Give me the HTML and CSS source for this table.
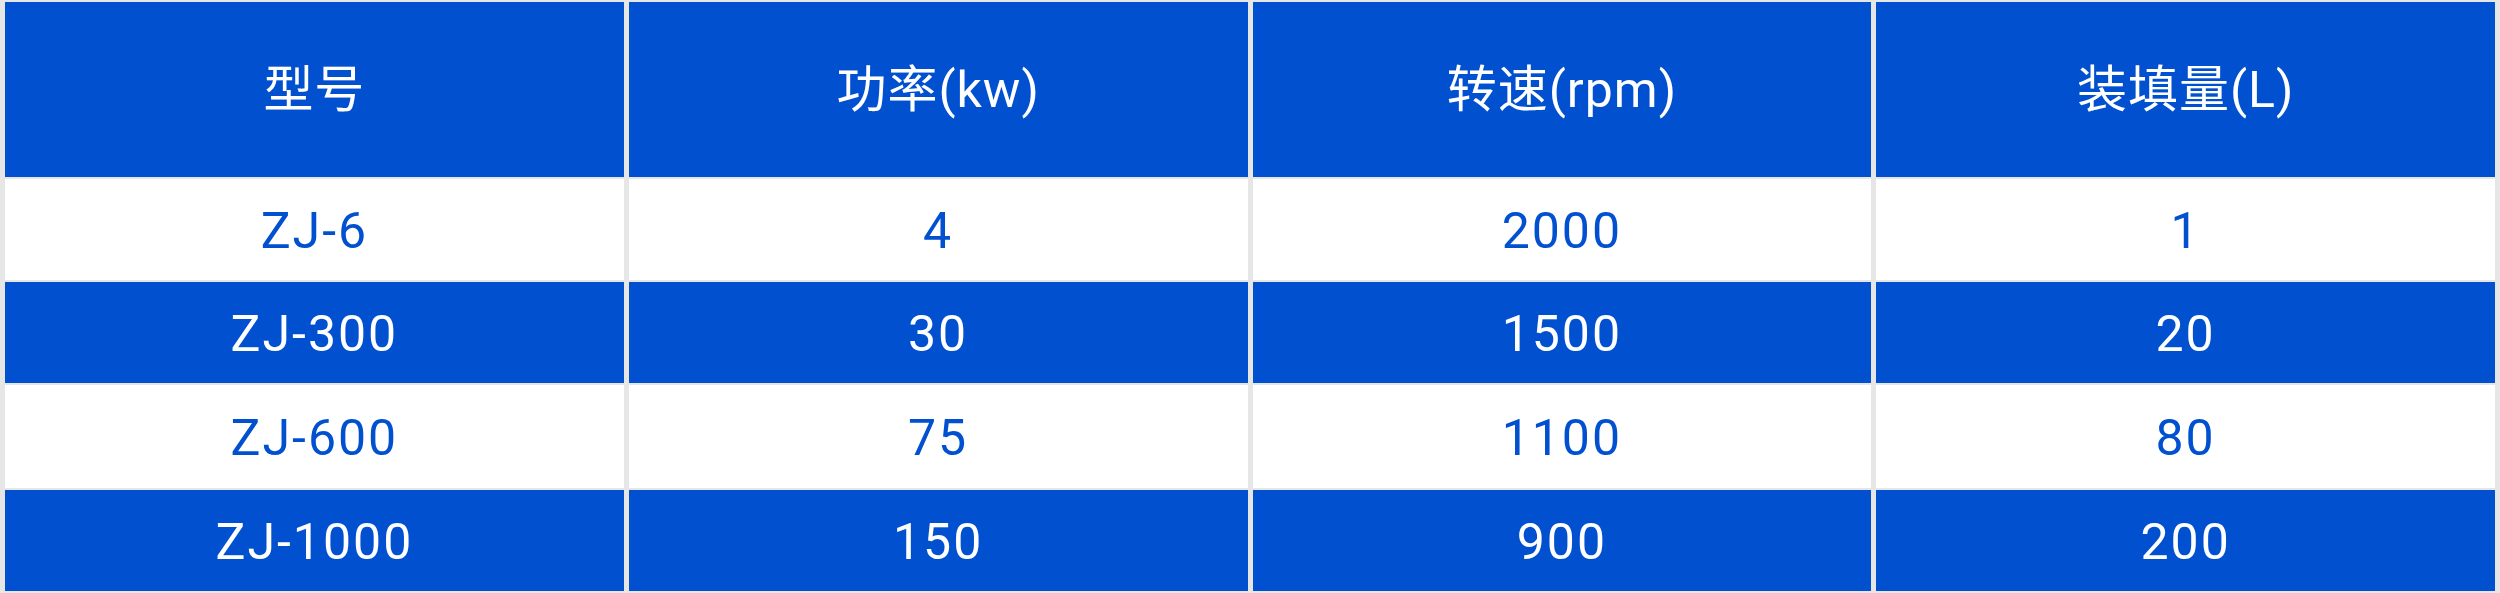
FILE: index.html
```html
<!DOCTYPE html>
<html lang="zh-CN">
<head>
<meta charset="utf-8">
<title>参数表</title>
<link rel="stylesheet" href="styles.css">
</head>
<body>
<table class="spec">
  <thead>
    <tr class="row-head">
      <th>型号</th>
      <th>功率(kw)</th>
      <th>转速(rpm)</th>
      <th>装填量(L)</th>
    </tr>
  </thead>
  <tbody>
    <tr class="row-light r1">
      <td>ZJ-6</td><td>4</td><td>2000</td><td>1</td>
    </tr>
    <tr class="row-dark r2">
      <td>ZJ-300</td><td>30</td><td>1500</td><td>20</td>
    </tr>
    <tr class="row-light r3">
      <td>ZJ-600</td><td>75</td><td>1100</td><td>80</td>
    </tr>
    <tr class="row-dark r4">
      <td>ZJ-1000</td><td>150</td><td>900</td><td>200</td>
    </tr>
  </tbody>
</table>
</body>
</html>
```
FILE: styles.css
```css
html, body {
  margin: 0;
  padding: 0;
  background: #e6e6e6;
}

.spec {
  width: 2500px;
  border-collapse: separate;
  border-spacing: 5px 2px;
  table-layout: fixed;
  font-family: Roboto, "Noto Sans CJK SC", sans-serif;
  font-size: 50px;
  font-weight: 400;
}

.spec th,
.spec td {
  box-sizing: border-box;
  padding: 0;
  text-align: center;
  vertical-align: middle;
  line-height: 1;
  font-weight: 400;
}

.spec th {
  letter-spacing: 1px;
}

.spec td {
  letter-spacing: 2px;
  padding-top: 3px;
}

.row-head th {
  height: 175px;
  background: #0050d0;
  color: #ffffff;
}

.row-light td {
  background: #ffffff;
  color: #0050d0;
}

.row-dark td {
  background: #0050d0;
  color: #ffffff;
}

.r1 td { height: 101px; }
.r2 td { height: 101px; }
.r3 td { height: 103px; }
.r4 td { height: 101px; }
```
